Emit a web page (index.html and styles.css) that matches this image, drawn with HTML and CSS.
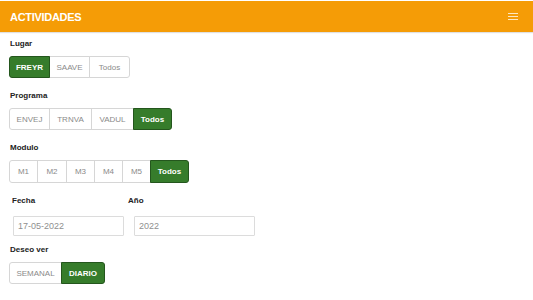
FILE: index.html
```html
<!DOCTYPE html>
<html>
<head>
<meta charset="utf-8">
<link rel="stylesheet" href="styles.css">
</head>
<body>
<header class="topbar">
  <span class="title">ACTIVIDADES</span>
  <span class="menu"><i></i><i></i><i></i></span>
</header>
<main class="content">
  <section class="field">
    <div class="label">Lugar</div>
    <div class="group">
      <button class="btn active w41">FREYR</button>
      <button class="btn w40">SAAVE</button>
      <button class="btn w40">Todos</button>
    </div>
  </section>
  <section class="field">
    <div class="label">Programa</div>
    <div class="group">
      <button class="btn w41">ENVEJ</button>
      <button class="btn w42">TRNVA</button>
      <button class="btn w42">VADUL</button>
      <button class="btn active w38">Todos</button>
    </div>
  </section>
  <section class="field">
    <div class="label">Modulo</div>
    <div class="group tall">
      <button class="btn w28">M1</button>
      <button class="btn w29">M2</button>
      <button class="btn w28">M3</button>
      <button class="btn w28">M4</button>
      <button class="btn w28">M5</button>
      <button class="btn active w38">Todos</button>
    </div>
  </section>
  <section class="row">
    <div class="col">
      <div class="label">Fecha</div>
      <input class="input in1" value="17-05-2022">
    </div>
    <div class="col">
      <div class="label">Año</div>
      <input class="input in2" value="2022">
    </div>
  </section>
  <section class="field last">
    <div class="label">Deseo ver</div>
    <div class="group">
      <button class="btn w53">SEMANAL</button>
      <button class="btn active w43">DIARIO</button>
    </div>
  </section>
</main>
</body>
</html>
```
FILE: styles.css
```css
html, body {
  margin: 0;
  padding: 0;
  background: #fff;
  font-family: "Liberation Sans", Arial, sans-serif;
}
.topbar {
  margin-top: 1px;
  height: 31px;
  background: #f59c06;
  display: flex;
  align-items: center;
  justify-content: space-between;
  padding: 0 15px 0 10px;
  box-shadow: 0 1px 1px rgba(0,0,0,0.12);
}
.title {
  color: #fff;
  font-weight: bold;
  font-size: 11px;
  letter-spacing: -0.3px;
}
.menu {
  display: flex;
  flex-direction: column;
  gap: 2px;
  width: 10px;
}
.menu i {
  display: block;
  height: 1px;
  background: #fde7bf;
}
.content {
  padding: 7px 0 0 9px;
}
.label {
  font-size: 8px;
  font-weight: bold;
  color: #222;
  height: 10px;
  line-height: 10px;
  margin-bottom: 7px;
  margin-left: 1px;
}
.field {
  margin-bottom: 13px;
}
.group {
  display: flex;
  height: 22px;
}
.group.tall {
  height: 23px;
}
.btn {
  box-sizing: border-box;
  height: 100%;
  margin: 0;
  margin-left: -1px;
  padding: 0;
  border: 1px solid #d6d6d6;
  background: #fff;
  color: #8a8a8a;
  font-family: "Liberation Sans", Arial, sans-serif;
  font-size: 8px;
  border-radius: 0;
}
.btn:first-child {
  margin-left: 0;
  border-radius: 3px 0 0 3px;
}
.btn:last-child {
  border-radius: 0 3px 3px 0;
}
.btn.active {
  background: #367c2b;
  border-color: #24561d;
  color: #fff;
  font-weight: bold;
  position: relative;
}
.w28 { width: 29px; }
.w29 { width: 30px; }
.w38 { width: 39px; }
.w40 { width: 41px; }
.w41 { width: 41px; }
.w42 { width: 43px; }
.w43 { width: 44px; }
.w53 { width: 53px; }
.row {
  display: flex;
  margin-bottom: 9px;
}
.row .label {
  margin-left: 3px;
  margin-bottom: 10px;
}
.col:first-child {
  width: 119px;
}
.input {
  box-sizing: border-box;
  display: block;
  height: 20px;
  border: 1px solid #dcdcdc;
  border-radius: 1px;
  margin-left: 4px;
  padding: 0 4px;
  font-family: "Liberation Sans", Arial, sans-serif;
  font-size: 9px;
  color: #8f8f8f;
  outline: none;
}
.in1 { width: 111px; }
.in2 { width: 121px; margin-left: 6px; }
.col:last-child .label { margin-left: 0; }
```
